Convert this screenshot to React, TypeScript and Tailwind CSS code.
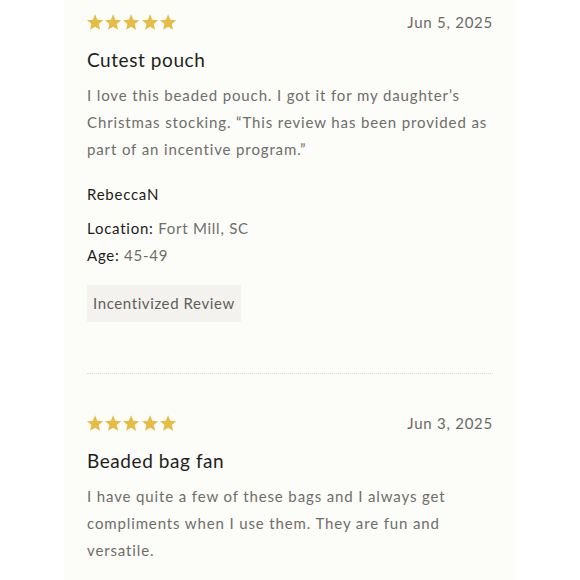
const font = { fontFamily: 'Lato, "Noto Sans", sans-serif' };

function Star() {
  return (
    <svg viewBox="0 0 24 24" className="h-[19px] w-[18.2px]" aria-hidden="true">
      <polygon
        points="12,1.2 14.9,8.5 22.7,9.1 16.8,14.1 18.6,21.7 12,17.6 5.4,21.7 7.2,14.1 1.3,9.1 9.1,8.5"
        fill="#e4bc46"
      />
    </svg>
  );
}

function Stars() {
  return (
    <div className="flex -ml-px">
      {[0, 1, 2, 3, 4].map((i) => (
        <Star key={i} />
      ))}
    </div>
  );
}

type Review = {
  date: string;
  title: string;
  body: string;
  name?: string;
  location?: string;
  age?: string;
  incentivized?: boolean;
};

const reviews: Review[] = [
  {
    date: 'Jun 5, 2025',
    title: 'Cutest pouch',
    body: 'I love this beaded pouch. I got it for my daughter\u2019s Christmas stocking. \u201CThis review has been provided as part of an incentive program.\u201D',
    name: 'RebeccaN',
    location: 'Fort Mill, SC',
    age: '45-49',
    incentivized: true,
  },
  {
    date: 'Jun 3, 2025',
    title: 'Beaded bag fan',
    body: 'I have quite a few of these bags and I always get compliments when I use them. They are fun and versatile.',
  },
];

function ReviewItem({ r }: { r: Review }) {
  return (
    <div>
      <div className="flex h-5 items-center justify-between">
        <Stars />
        <span className="text-[15px] tracking-[0.05em] text-[#6a6a67]">{r.date}</span>
      </div>
      <h3 className="mt-[14px] text-[19px] leading-[28px] tracking-[0.03em] text-[#1e1e1e]">{r.title}</h3>
      <p className="mt-2 text-[15px] leading-[27px] tracking-[0.058em] text-[#6e6e6b]">{r.body}</p>
      {r.name && (
        <>
          <div className="mt-[18px] text-[15px] leading-[27px] tracking-[0.05em] text-[#1c1c1c]">{r.name}</div>
          <div className="mt-[7px] text-[15px] leading-[27px] tracking-[0.05em] text-[#6e6e6b]">
            <span className="text-[#1c1c1c]">Location:</span> {r.location}
          </div>
          <div className="text-[15px] leading-[27px] tracking-[0.05em] text-[#6e6e6b]">
            <span className="text-[#1c1c1c]">Age:</span> {r.age}
          </div>
        </>
      )}
      {r.incentivized && (
        <div className="mt-[16px] inline-flex h-[37px] items-center bg-[#f3f2ee] px-[6px] text-[15px] tracking-[0.04em] text-[#5e5e5b]">
          Incentivized Review
        </div>
      )}
    </div>
  );
}

export default function App() {
  return (
    <div className="flex h-[580px] w-[580px] overflow-hidden bg-white" style={font}>
      <div className="ml-16 h-full w-[451px] bg-[#fcfcf8] pl-[23px] pr-[22px] pt-3">
        <ReviewItem r={reviews[0]} />
        <div className="mt-[51px] border-t border-dotted border-[#dcdcd8]" />
        <div className="pt-[39px]">
          <ReviewItem r={reviews[1]} />
        </div>
      </div>
    </div>
  );
}
